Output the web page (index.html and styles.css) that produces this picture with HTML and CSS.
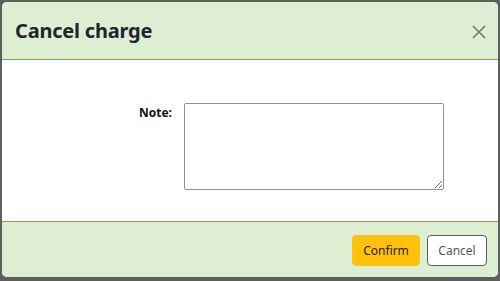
FILE: index.html
```html
<!DOCTYPE html>
<html lang="en">
<head>
  <meta charset="UTF-8">
  <meta name="viewport" content="width=device-width, initial-scale=1.0">
  <title>Cancel charge</title>
  <link rel="stylesheet" href="styles.css">
</head>
<body>

  <!-- Cancel charge modal -->
  <div class="modal">
    <div class="modal-header">
      <h1 class="modal-title">Cancel charge</h1>
      <button class="close-btn" aria-label="Close">
        <svg width="14" height="14" viewBox="0 0 14 14">
          <path d="M1 1L13 13M13 1L1 13" stroke="#6c7a6a" stroke-width="1.6" fill="none"/>
        </svg>
      </button>
    </div>

    <div class="modal-body">
      <div class="form-row">
        <label for="note" class="form-label">Note:</label>
        <textarea id="note" class="form-note"></textarea>
      </div>
    </div>

    <div class="modal-footer">
      <button class="btn btn-confirm">Confirm</button>
      <button class="btn btn-cancel">Cancel</button>
    </div>
  </div>

</body>
</html>
```

FILE: styles.css
```css
html, body {
  height: 100%;
}
body {
  margin: 0;
  padding: 2px 2px 0 2px;
  box-sizing: border-box;
  background-color: #5e5e5e;
  font-family: "Noto Sans", Arial, sans-serif;
  color: #222;
}
.modal {
  background-color: #ffffff;
  border-radius: 5px;
  overflow: hidden;
  height: 275px;
  display: flex;
  flex-direction: column;
}
.modal-header {
  background-color: #ddeed3;
  border-bottom: 1px solid #76a84c;
  height: 57px;
  display: flex;
  align-items: center;
  justify-content: space-between;
  padding: 0 12px 0 13px;
}
.modal-title {
  margin: 0;
  font-size: 20px;
  font-weight: 700;
  color: #1f2630;
  letter-spacing: -0.2px;
}
.close-btn {
  background: none;
  border: none;
  padding: 0;
  width: 14px;
  height: 14px;
  display: flex;
  margin-top: 2px;
}
.modal-body {
  height: 161px;
  box-sizing: border-box;
  padding-top: 43px;
}
.form-row {
  display: flex;
  align-items: flex-start;
}
.form-label {
  width: 170px;
  text-align: right;
  font-size: 12px;
  font-weight: 700;
  color: #111;
  padding-top: 1px;
}
.form-note {
  margin-left: 12px;
  width: 260px;
  height: 87px;
  box-sizing: border-box;
  border: 1px solid #8f8f9d;
  border-radius: 2px;
  padding: 2px;
  font-family: inherit;
}
.modal-footer {
  flex: 1;
  background-color: #ddeed3;
  border-top: 1px solid #76a84c;
  display: flex;
  justify-content: flex-end;
  align-items: flex-start;
  gap: 7px;
  padding: 13px 11px 0 0;
}
.btn {
  font-family: inherit;
  font-size: 12px;
  height: 31px;
  border-radius: 4px;
  padding: 0 10px;
  cursor: pointer;
}
.btn-confirm {
  background-color: #ffc10a;
  border: 1px solid #ffc10a;
  color: #222;
  width: 68px;
}
.btn-cancel {
  background-color: #ffffff;
  border: 1px solid #5e5e5e;
  color: #555;
  width: 60px;
}
```
